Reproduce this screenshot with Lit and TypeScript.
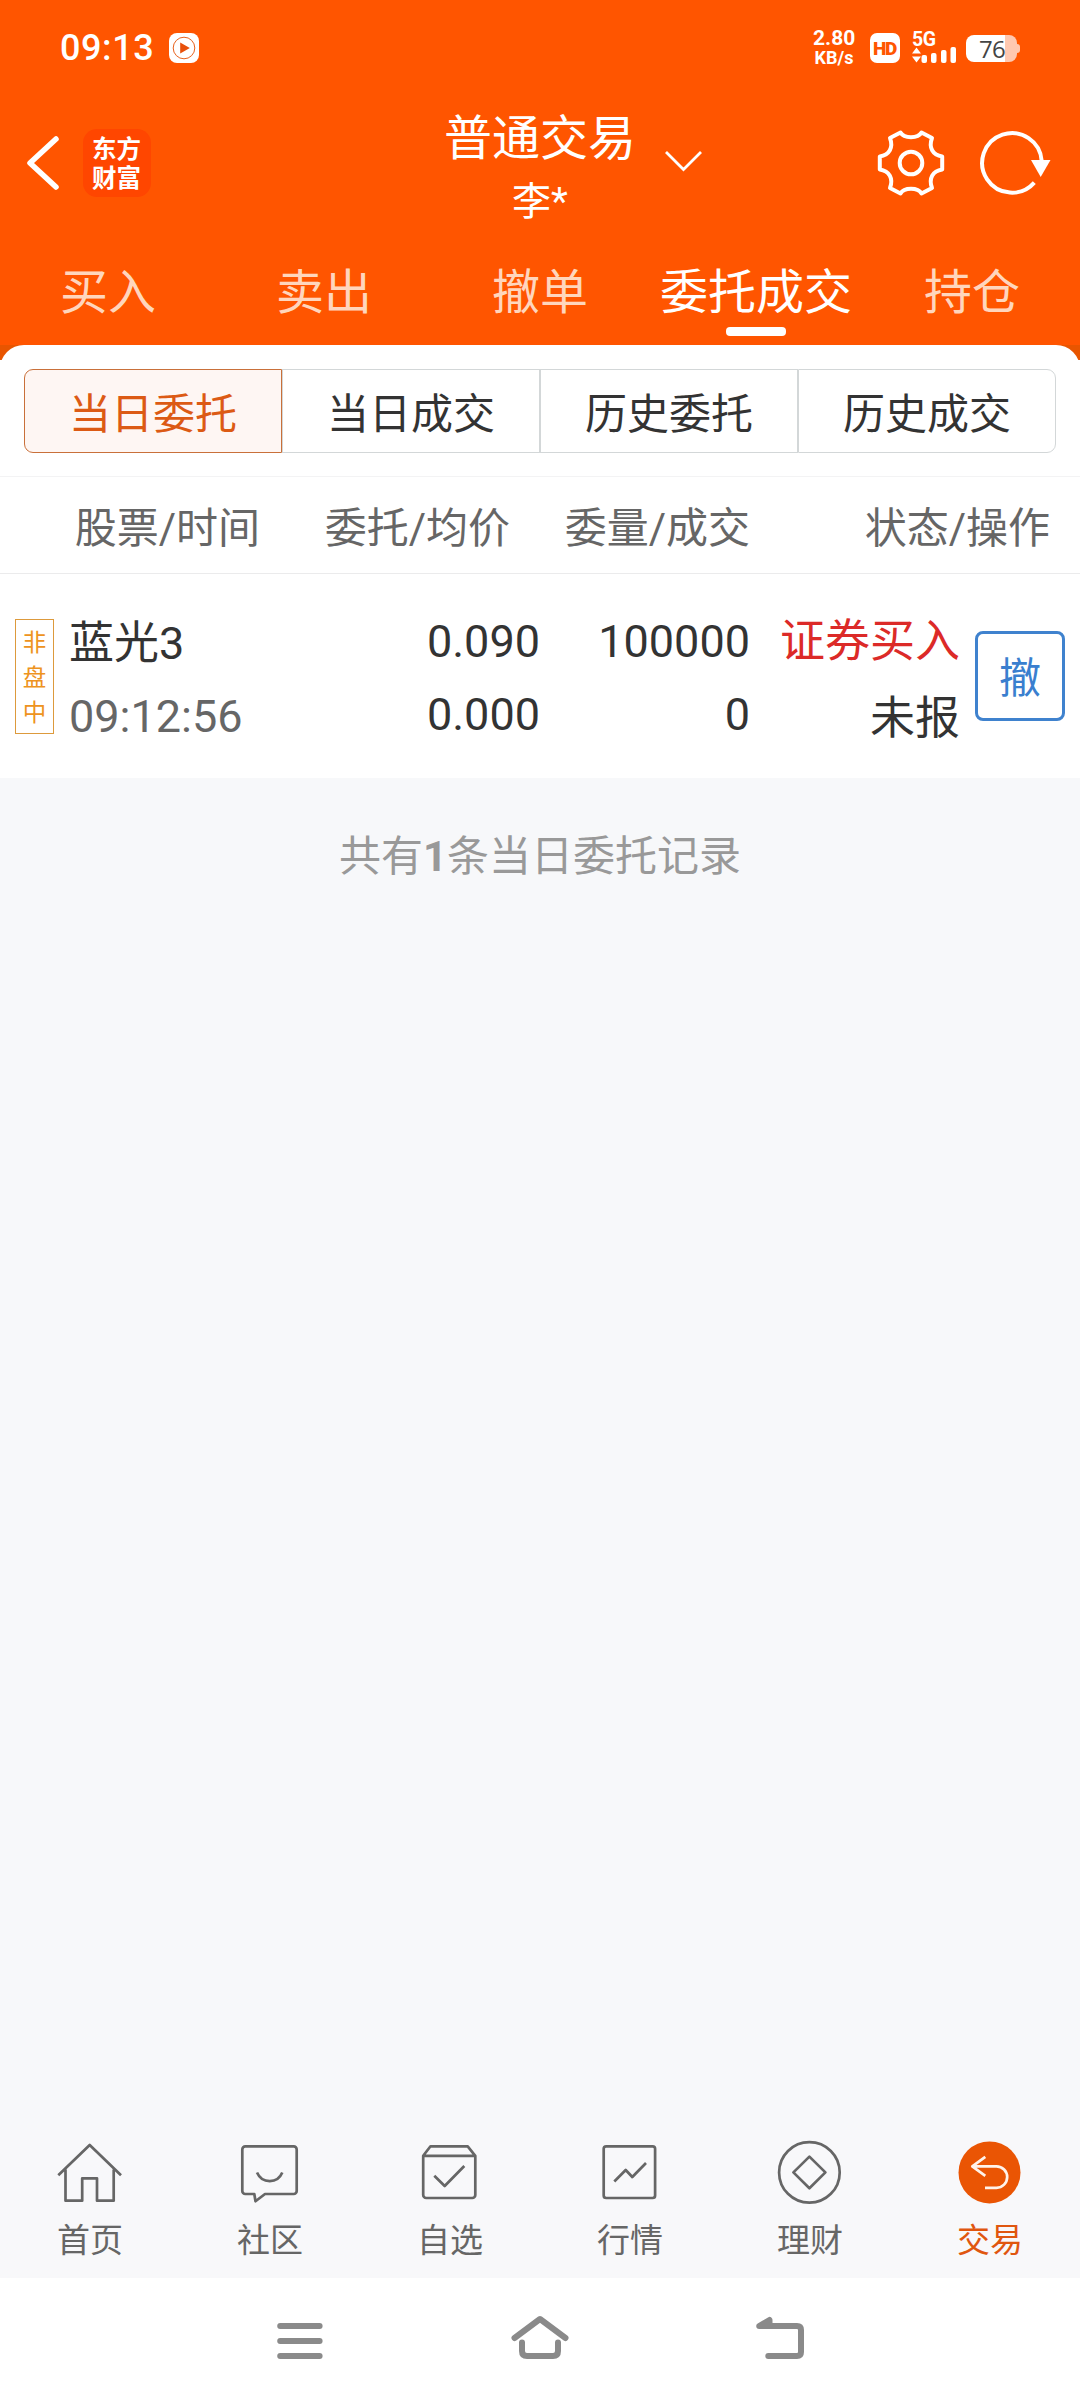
import { LitElement, html, css, svg } from "lit";
import { customElement, state } from "lit/decorators.js";
import { classMap } from "lit/directives/class-map.js";

const textFont = css`Roboto, "Noto Sans CJK SC", sans-serif`;

@customElement("status-bar")
class StatusBar extends LitElement {
  static styles = css`
    :host { display: flex; height: 96px; padding: 0 60px 0 60px; align-items: center; color: #fff; font-family: ${textFont}; box-sizing: border-box; }
    .time { font-size: 36px; font-weight: 500; line-height: 42px; letter-spacing: 0.6px; }
    .play { margin-left: 15px; }
    .speed { margin-left: auto; width: 42px; text-align: center; font-weight: 700; display: flex; flex-direction: column; }
    .rate { font-size: 21px; line-height: 20px; }
    .unit { font-size: 18px; line-height: 20px; }
    .hd { margin-left: 15px; width: 30px; height: 30px; border-radius: 7px; background: #fff; color: #ff5500; font-size: 19px; font-weight: 900; line-height: 31px; text-align: center; letter-spacing: -1.2px; text-indent: -1px; }
    .signal { margin-left: 12px; display: flex; flex-direction: column; width: 45px; }
    .net { font-size: 19.5px; font-weight: 700; line-height: 14px; height: 14px; letter-spacing: -0.5px; }
    svg { display: block; }
    .battery { margin-left: 9px; display: flex; align-items: center; }
    .cell { width: 51px; height: 27px; border-radius: 8px; background: linear-gradient(to right, #fff 39px, #ffc8b0 39px); color: #444; font-family: "Open Sans", sans-serif; font-size: 24px; line-height: 27px; text-align: center; box-sizing: border-box; padding-left: 1px; letter-spacing: -0.8px; }
    .nub { width: 3px; height: 9px; border-radius: 0 3px 3px 0; background: #ffc8b0; }
  `;
  render() {
    return html`
      <span class="time">09:13</span>
      <svg class="play" width="30" height="30" viewBox="0 0 30 30">
        <rect width="30" height="30" rx="8" fill="#fff"/>
        <circle cx="15" cy="15" r="10.8" fill="none" stroke="#e8611c" stroke-width="1"/>
        <path d="M11.2 9.6 20.8 15 11.2 20.6Z" fill="#e8500a"/>
      </svg>
      <div class="speed"><span class="rate">2.80</span><span class="unit">KB/s</span></div>
      <div class="hd">HD</div>
      <div class="signal">
        <span class="net">5G</span>
        <svg width="45" height="16" viewBox="0 0 45 16" fill="#fff">
          <path d="M0 6.5 4.5 0.5 9 6.5ZM0 9.5H9L4.5 15.5Z"/>
          <rect x="9.5" y="8" width="5.5" height="8" rx="2"/>
          <rect x="19" y="6" width="5.5" height="10" rx="2"/>
          <rect x="29" y="3" width="5.5" height="13" rx="2"/>
          <rect x="38.5" y="0" width="5.5" height="16" rx="2"/>
        </svg>
      </div>
      <div class="battery"><div class="cell">76</div><div class="nub"></div></div>
    `;
  }
}

@customElement("title-bar")
class TitleBar extends LitElement {
  static styles = css`
    :host { display: grid; grid-template-columns: 1fr auto 1fr; height: 134px; color: #fff; font-family: ${textFont}; }
    .left { display: flex; align-items: center; height: 134px; padding-left: 24px; box-sizing: border-box; }
    .right { display: flex; align-items: center; height: 134px; justify-content: flex-end; padding-right: 27px; gap: 31px; }
    svg { display: block; }
    .logo { margin-left: 17px; width: 68px; height: 68px; border-radius: 14px; background: #ff4600; display: flex; align-items: center; justify-content: center; font-family: "Noto Sans CJK SC", sans-serif; font-weight: 700; font-size: 24.5px; line-height: 29px; padding-bottom: 3px; box-sizing: border-box; }
    .logo span { width: 50px; word-break: break-all; }
    .center { display: flex; flex-direction: column; align-items: center; padding-top: 14px; }
    .name { font-size: 48px; line-height: 58px; white-space: nowrap; }
    .user { font-size: 39px; line-height: 48px; margin-top: 10px; }
    .drop { margin: 0 auto 0 28px; }
  `;
  render() {
    return html`
      <div class="left">
        <svg width="42" height="60" viewBox="0 0 42 60" fill="none" stroke="#fff" stroke-width="5.5" stroke-linejoin="round" stroke-linecap="round">
          <path d="M32 6 6 30 32 54"/>
        </svg>
        <div class="logo"><span>东方财富</span></div>
      </div>
      <div class="center"><span class="name">普通交易</span><span class="user">李*</span></div>
      <div class="right">
        <svg class="drop" width="40" height="24" viewBox="0 0 40 24" fill="none" stroke="#fff" stroke-width="2.8">
          <path d="M2 1 19.5 18.5 37 1"/>
        </svg>
        <svg width="70" height="70" viewBox="-35 -35 70 70" fill="none" stroke="#fff" stroke-width="4" stroke-linejoin="round">
          <path d="M-10.5 -30.5C-7 -24.3 7 -24.3 10.5 -30.5L21 -25C17.5 -15.5 21.5 -8 31.2 -6.5V6.5C21.5 8 17.5 15.5 21 25L10.5 30.5C7 24.3 -7 24.3 -10.5 30.5L-21 25C-17.5 15.5 -21.5 8 -31.2 6.5V-6.5C-21.5 -8 -17.5 -15.5 -21 -25Z"/>
          <circle r="11.3"/>
        </svg>
        <svg width="76" height="70" viewBox="-35 -35 76 70" fill="none">
          <path d="M29.7 -2A29.8 29.8 0 1 0 22.3 19.6" stroke="#fff" stroke-width="4"/>
          <path d="M19 -3H38.5L28.7 14Z" fill="#fff"/>
        </svg>
      </div>
    `;
  }
}

@customElement("trade-tabs")
class TradeTabs extends LitElement {
  @state() private active = 3;
  private items = ["买入", "卖出", "撤单", "委托成交", "持仓"];
  static styles = css`
    :host { display: grid; grid-template-columns: repeat(5, 1fr); height: 115px; font-family: ${textFont}; }
    .tab { display: flex; flex-direction: column; align-items: center; padding-top: 31px; font-size: 48px; line-height: 64px; color: #ffd6bd; white-space: nowrap; }
    .on { color: #fff; }
    .on::after { content: ""; width: 60px; height: 9px; border-radius: 4px; background: #fff; margin-top: 2px; }
  `;
  render() {
    return this.items.map((t, i) => html`
      <div class=${classMap({ tab: true, on: i === this.active })} @click=${() => (this.active = i)}>${t}</div>`);
  }
}

@customElement("order-filter")
class OrderFilter extends LitElement {
  @state() private active = 0;
  private items = ["当日委托", "当日成交", "历史委托", "历史成交"];
  static styles = css`
    :host { display: grid; grid-template-columns: repeat(4, 1fr); padding: 9px 24px 23px; height: 116px; box-sizing: border-box; background: #fff; font-family: ${textFont}; }
    .seg { height: 84px; border: 1px solid #d3d7d8; font-size: 42px; line-height: 75px; text-align: center; color: #333; padding-top: 7px; box-sizing: border-box; }
    .seg:first-child { border-radius: 9px 0 0 9px; }
    .seg:last-child { border-radius: 0 9px 9px 0; }
    .on { border-color: #c9703a; background: #fef6f3; color: #dc5a14; }
  `;
  render() {
    return this.items.map((t, i) => html`
      <div class=${classMap({ seg: true, on: i === this.active })} @click=${() => (this.active = i)}>${t}</div>`);
  }
}

interface Order {
  flag: string; name: string; time: string; price: string; avg: string;
  qty: string; filled: string; side: string; status: string;
}

@customElement("order-list")
class OrderList extends LitElement {
  private orders: Order[] = [{
    flag: "非盘中", name: "蓝光3", time: "09:12:56", price: "0.090", avg: "0.000",
    qty: "100000", filled: "0", side: "证券买入", status: "未报",
  }];
  static styles = css`
    :host { display: block; font-family: ${textFont}; }
    .head { display: grid; grid-template-columns: 260px 250px 240px 300px; height: 98px; box-sizing: border-box; border-top: 1px solid #f3f3f4; border-bottom: 1px solid #ebebec; background: #fff; color: #666; font-size: 42px; line-height: 104px; text-align: right; }
    .row { display: grid; grid-template-columns: 55px 260px 225px 210px 210px 105px; height: 204px; background: #fff; color: #333; font-size: 45px; }
    .flag { margin: 45px 0 0 15px; width: 39px; height: 115px; box-sizing: border-box; border: 1px solid #dd9a3c; color: #ee9320; font-size: 23.5px; line-height: 35px; text-align: center; display: flex; flex-direction: column; padding-top: 6px; }
    .col { display: flex; flex-direction: column; text-align: right; padding-top: 38px; line-height: 60px; gap: 13px; }
    .first { text-align: left; padding: 40px 0 0 14px; }
    .last { padding-top: 38px; gap: 17px; }
    .time { color: #666; }
    .buy { color: #dc2a28; }
    .cancel { margin: 57px 0 0 15px; width: 90px; height: 90px; box-sizing: border-box; border: 3px solid #3f82ce; border-radius: 8px; color: #3a7fcf; font-size: 42px; line-height: 90px; text-align: center; }
    .total { margin-top: 46px; text-align: center; color: #999; font-size: 42px; line-height: 66px; }
  `;
  render() {
    return html`
      <div class="head"><span>股票/时间</span><span>委托/均价</span><span>委量/成交</span><span>状态/操作</span></div>
      ${this.orders.map((o) => html`
        <div class="row">
          <div class="flag">${[...o.flag].map((c) => html`<span>${c}</span>`)}</div>
          <div class="col first"><span>${o.name}</span><span class="time">${o.time}</span></div>
          <div class="col"><span>${o.price}</span><span>${o.avg}</span></div>
          <div class="col"><span>${o.qty}</span><span>${o.filled}</span></div>
          <div class="col last"><span class="buy">${o.side}</span><span>${o.status}</span></div>
          <div class="cancel">撤</div>
        </div>`)}
      <div class="total">共有<b>${this.orders.length}</b>条当日委托记录</div>
    `;
  }
}

@customElement("bottom-tabs")
class BottomTabs extends LitElement {
  private items = [
    { label: "首页", icon: svg`<path d="M8.3 45.3 39.7 15 71 45.3M15.5 39.5V70.7H32.2V48.3H47V70.7H63.7V39.5"/>` },
    { label: "社区", icon: svg`<path d="M15.3 16.4H63.7A3 3 0 0 1 66.7 19.4V61A3 3 0 0 1 63.7 64H35L25.5 71.3 24.3 64H15.3A3 3 0 0 1 12.3 61V19.4A3 3 0 0 1 15.3 16.4ZM27 42.5C32 54 47.5 54 52.3 42.5"/>` },
    { label: "自选", icon: svg`<path d="M13.2 25.8 20.5 16.3H57.7L65.3 25.8V65A3 3 0 0 1 62.3 68H16.2A3 3 0 0 1 13.2 65ZM13.2 25.8H65.3M24.3 45.7 34.7 56 54.3 36"/>` },
    { label: "行情", icon: svg`<rect x="13.7" y="16.3" width="51.4" height="51.7" rx="2.5"/><path d="M24.3 51.5 35.7 40 42.3 47 56 33"/>` },
    { label: "理财", icon: svg`<circle cx="39.4" cy="42.4" r="30.3"/><path d="M39.4 26.6 55.4 42.4 39.4 58.2 23.4 42.4Z"/>` },
    { label: "交易", icon: svg`<circle cx="39.5" cy="42.4" r="31" fill="#ea5504" stroke="none"/><path d="M35.3 26.8 22.3 36.4 35.3 45.8M22.3 36.4H46.5A10.7 10.7 0 0 1 46.5 57.8H35" stroke="#fff3ea"/>`, on: true },
  ];
  static styles = css`
    :host { display: grid; grid-template-columns: repeat(6, 1fr); height: 148px; font-family: ${textFont}; background: #f8f8fa; }
    .item { display: flex; flex-direction: column; align-items: center; color: #666; font-size: 33px; line-height: 44px; }
    svg { display: block; }
    .on { color: #e0560f; }
    .item span { margin-top: 9px; }
  `;
  render() {
    return this.items.map((t) => html`
      <div class=${classMap({ item: true, on: !!t.on })}>
        <svg width="80" height="80" viewBox="0 0 80 80" fill="none" stroke="#666" stroke-width="2.7" stroke-linejoin="round">${t.icon}</svg>
        <span>${t.label}</span>
      </div>`);
  }
}

@customElement("system-nav")
class SystemNav extends LitElement {
  static styles = css`
    :host { display: flex; justify-content: space-between; height: 126px; padding: 0 260px; background: #fff; }
    svg { display: block; }
  `;
  private icon(shape: unknown) {
    return html`<svg width="80" height="126" viewBox="0 0 80 126" fill="none" stroke="#8a8a8a" stroke-width="6" stroke-linecap="round" stroke-linejoin="round">${shape}</svg>`;
  }
  render() {
    return html`
      ${this.icon(svg`<path d="M20.2 48H59.6M20.2 63H59.6M20.2 78H59.6"/>`)}
      ${this.icon(svg`<path d="M14.5 60 40 41 65.5 60M22 64.5V73Q22 78 27 78H53Q58 78 58 73V64.5"/>`)}
      ${this.icon(svg`<path d="M28.3 78H57Q61 78 61 74V52Q61 48 57 48H19.2L29.5 42V46"/>`)}
    `;
  }
}

@customElement("app-root")
class AppRoot extends LitElement {
  static styles = css`
    :host { display: flex; flex-direction: column; width: 1080px; height: 2404px; background: #f7f8fa; overflow: hidden; }
    .top { background: #ff5500; }
    .edge { height: 15px; background: #e85500; overflow: hidden; }
    .curve { height: 30px; background: #fff; border-radius: 24px 24px 0 0; }
    bottom-tabs { margin-top: auto; }
  `;
  render() {
    return html`
      <div class="top"><status-bar></status-bar><title-bar></title-bar><trade-tabs></trade-tabs></div>
      <div class="edge"><div class="curve"></div></div>
      <order-filter></order-filter>
      <order-list></order-list>
      <bottom-tabs></bottom-tabs>
      <system-nav></system-nav>
    `;
  }
}
